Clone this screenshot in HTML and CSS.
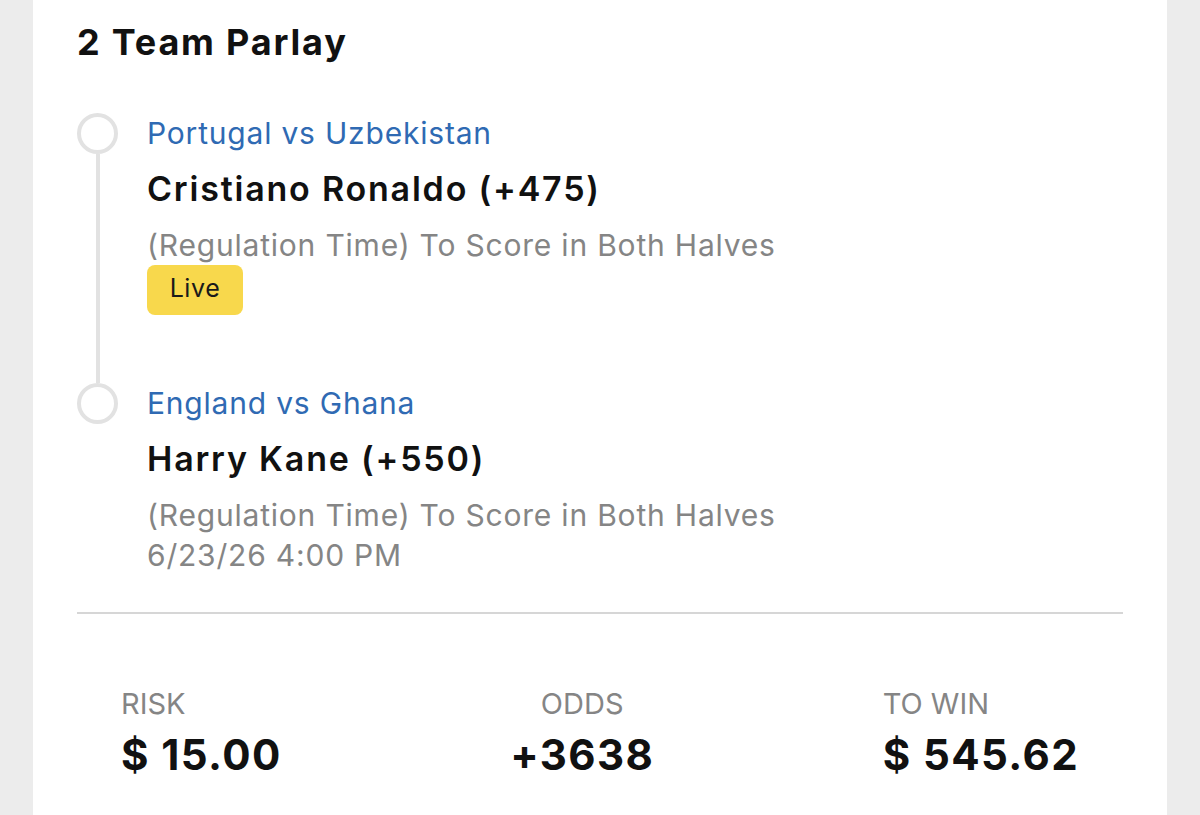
FILE: index.html
```html
<!DOCTYPE html>
<html lang="en">
<head>
 <meta charset="UTF-8">
 <meta name="viewport" content="width=device-width, initial-scale=1.0">
 <title>Bet Slip</title>
 <link rel="stylesheet" href="styles.css">
</head>
<body>

 <div class="card">
 <h2 class="bet-title">2 Team Parlay</h2>

 <div class="legs">
 <div class="leg">
 <div class="marker">
 <span class="dot"></span>
 <span class="rail"></span>
 </div>
 <div class="leg-info">
 <div class="match">Portugal vs Uzbekistan</div>
 <div class="pick">Cristiano Ronaldo (+475)</div>
 <div class="market">(Regulation Time) To Score in Both Halves</div>
 <span class="live-tag">Live</span>
 </div>
 </div>

 <div class="leg last">
 <div class="marker">
 <span class="dot"></span>
 </div>
 <div class="leg-info">
 <div class="match">England vs Ghana</div>
 <div class="pick">Harry Kane (+550)</div>
 <div class="market">(Regulation Time) To Score in Both Halves</div>
 <div class="market">6/23/26 4:00 PM</div>
 </div>
 </div>
 </div>

 <div class="totals">
 <div class="total">
 <div class="total-label">RISK</div>
 <div class="total-value">$ 15.00</div>
 </div>
 <div class="total center">
 <div class="total-label">ODDS</div>
 <div class="total-value">+3638</div>
 </div>
 <div class="total">
 <div class="total-label">TO WIN</div>
 <div class="total-value">$ 545.62</div>
 </div>
 </div>
 </div>

</body>
</html>
```

FILE: styles.css
```css
/* Page */
body {
margin: 0;
background: #ececec;
font-family: Inter, "Noto Sans", sans-serif;
color: #111;
}

/* Bet card */
.card {
margin: 0 33px;
min-height: 815px;
background: #fff;
padding: 0 44px;
box-sizing: border-box;
}

.bet-title {
margin: 0;
padding-top: 20px;
font-size: 36px;
line-height: 44px;
font-weight: 700;
letter-spacing: 1.8px;
}

/* Legs with timeline */
.legs {
margin-top: 49px;
}

.leg {
display: flex;
gap: 29px;
padding-bottom: 68px;
}

.leg.last {
padding-bottom: 0;
}

.marker {
width: 41px;
display: flex;
flex-direction: column;
align-items: center;
}

.dot {
width: 41px;
height: 41px;
border: 4px solid #e2e2e2;
border-radius: 50%;
box-sizing: border-box;
flex-shrink: 0;
}

.rail {
flex: 1;
width: 4px;
background: #e2e2e2;
margin-bottom: -68px;
}

.leg-info {
display: flex;
flex-direction: column;
align-items: flex-start;
}

.match {
font-size: 30px;
line-height: 40px;
letter-spacing: 0.8px;
color: #2f6ab3;
}

.pick {
margin-top: 16px;
font-size: 34px;
line-height: 40px;
font-weight: 600;
letter-spacing: 1.8px;
color: #111;
}

.market {
font-size: 30px;
line-height: 40px;
letter-spacing: 0.8px;
color: #858585;
}

.pick + .market {
margin-top: 16px;
}

.live-tag {
display: inline-block;
width: 96px;
height: 50px;
line-height: 46px;
text-align: center;
font-size: 25px;
letter-spacing: 0.6px;
color: #1a1a1a;
background: #f8d84c;
border-radius: 8px;
}

/* Totals row */
.totals {
margin-top: 37px;
border-top: 2px solid #d6d6d6;
padding: 72px 44px 0;
display: flex;
justify-content: space-between;
}

.total.center {
text-align: center;
}

.total-label {
font-size: 29px;
line-height: 36px;
color: #858585;
}

.total-value {
margin-top: 9px;
font-size: 42px;
line-height: 48px;
font-weight: 700;
letter-spacing: 1.4px;
color: #111;
}
```
